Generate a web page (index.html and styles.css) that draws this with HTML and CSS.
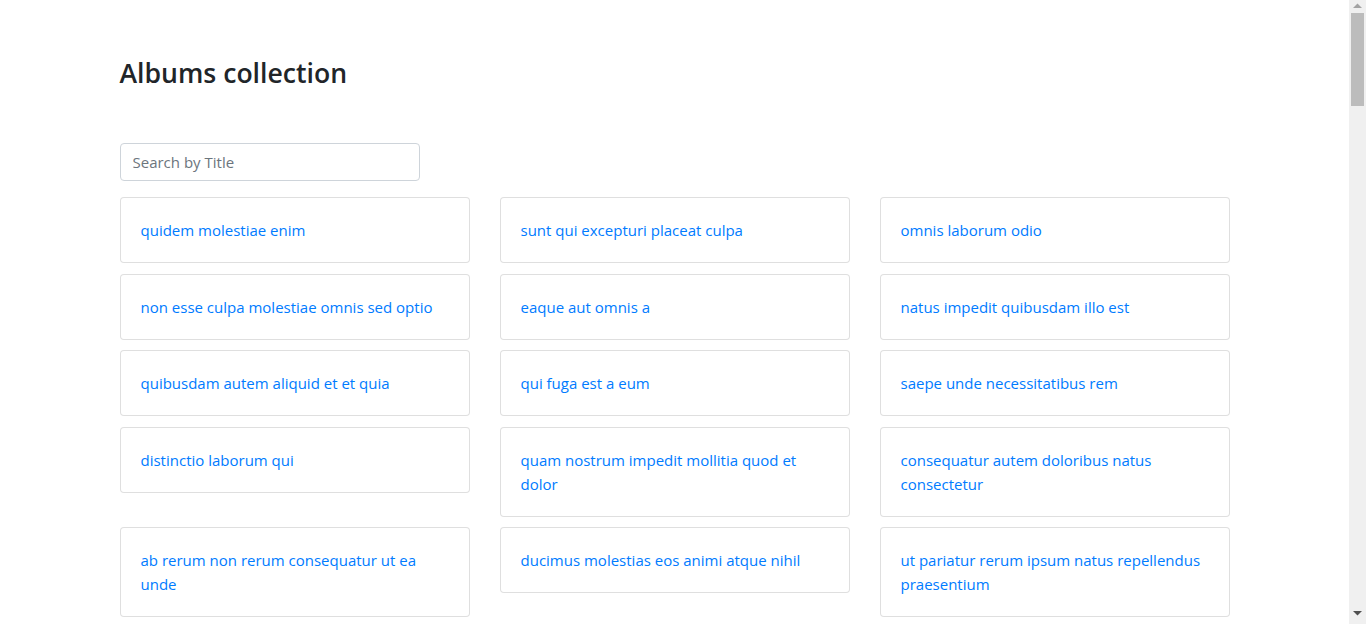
FILE: index.html
```html
<!DOCTYPE html>
<html lang="en">
<head>
<meta charset="utf-8">
<title>Albums collection</title>
<link rel="stylesheet" href="styles.css">
</head>
<body>
<div class="container">
  <h3 class="title">Albums collection</h3>
  <input class="search" type="text" placeholder="Search by Title">
  <div class="grid">
    <div class="card"><a href="#">quidem molestiae enim</a></div>
    <div class="card"><a href="#">sunt qui excepturi placeat culpa</a></div>
    <div class="card"><a href="#">omnis laborum odio</a></div>
    <div class="card"><a href="#">non esse culpa molestiae omnis sed optio</a></div>
    <div class="card"><a href="#">eaque aut omnis a</a></div>
    <div class="card"><a href="#">natus impedit quibusdam illo est</a></div>
    <div class="card"><a href="#">quibusdam autem aliquid et et quia</a></div>
    <div class="card"><a href="#">qui fuga est a eum</a></div>
    <div class="card"><a href="#">saepe unde necessitatibus rem</a></div>
    <div class="card"><a href="#">distinctio laborum qui</a></div>
    <div class="card"><a href="#">quam nostrum impedit mollitia quod et dolor</a></div>
    <div class="card"><a href="#">consequatur autem doloribus natus consectetur</a></div>
    <div class="card"><a href="#">ab rerum non rerum consequatur ut ea unde</a></div>
    <div class="card"><a href="#">ducimus molestias eos animi atque nihil</a></div>
    <div class="card"><a href="#">ut pariatur rerum ipsum natus repellendus praesentium</a></div>
  </div>
</div>
<div class="scrollbar" aria-hidden="true">
  <svg class="arrow arrow-up" width="17" height="13" viewBox="0 0 17 13"><polygon points="4,8 13,8 8.5,3.5" fill="#a3a3a3"/></svg>
  <div class="thumb"></div>
  <svg class="arrow arrow-down" width="17" height="13" viewBox="0 0 17 13"><polygon points="4,4 13,4 8.5,8.5" fill="#505050"/></svg>
</div>
</body>
</html>
```
FILE: styles.css
```css
html, body {
  margin: 0;
  padding: 0;
  background: #fff;
}
body {
  font-family: "Open Sans", "Liberation Sans", sans-serif;
  font-size: 15px;
  line-height: 24px;
  color: #212529;
  padding-right: 17px;
  height: 624px;
  overflow: hidden;
  box-sizing: border-box;
}
.container {
  width: 1110px;
  margin: 0 auto;
  padding: 56px 0 40px;
  box-sizing: border-box;
}
.title {
  margin: 0 0 53px;
  font-size: 26.6px;
  font-weight: 600;
  line-height: 34px;
  color: #212529;
}
.search {
  display: block;
  width: 300px;
  height: 38px;
  box-sizing: border-box;
  padding: 6px 12px;
  border: 1px solid #ced4da;
  border-radius: 4px;
  font-family: inherit;
  font-size: 15px;
  color: #495057;
  margin: 0 0 16px;
  outline: none;
}
.search::placeholder {
  color: #6c757d;
}
.grid {
  display: grid;
  grid-template-columns: repeat(3, 350px);
  column-gap: 30px;
  row-gap: 10.5px;
  align-items: start;
}
.card {
  border: 1px solid rgba(0, 0, 0, 0.125);
  border-radius: 4px;
  padding: 20px;
  background: #fff;
}
.card a {
  color: #007bff;
  text-decoration: none;
}
.scrollbar {
  position: fixed;
  top: 0;
  right: 0;
  width: 17px;
  height: 624px;
  background: #f0f0f0;
  display: flex;
  flex-direction: column;
  align-items: center;
}
.arrow {
  display: block;
  flex: none;
}
.thumb {
  width: 13px;
  height: 93px;
  background: #bcbcbc;
  flex: none;
}
.arrow-down {
  margin-top: auto;
  margin-bottom: 4px;
}
```
